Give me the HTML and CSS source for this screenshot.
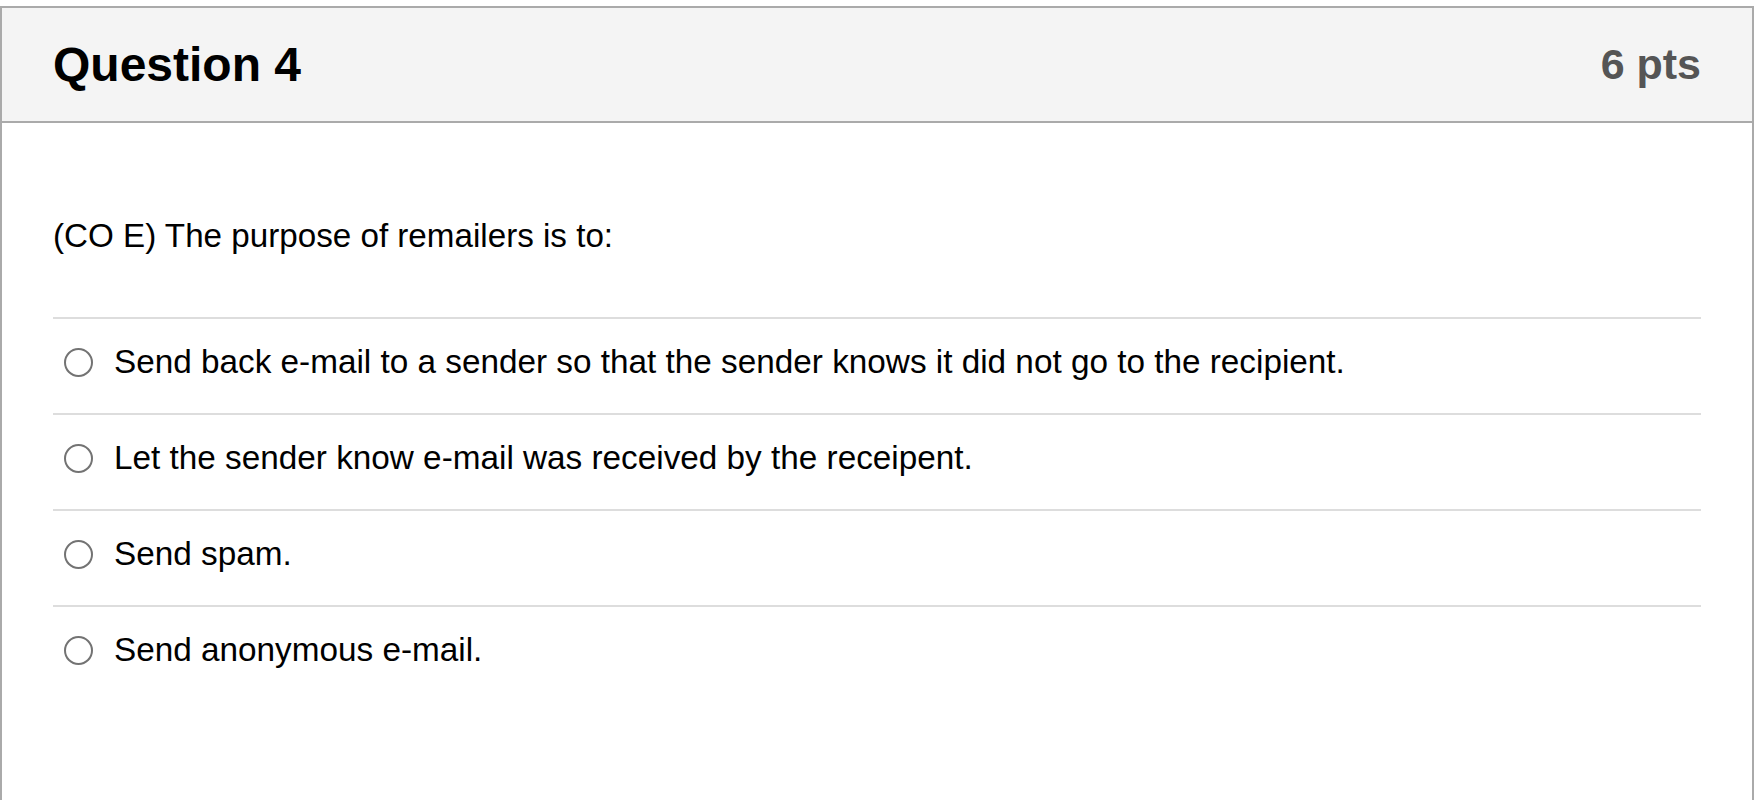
FILE: index.html
```html
<!DOCTYPE html>
<html lang="en">
<head>
<meta charset="utf-8">
<title>Question 4</title>
<link rel="stylesheet" href="styles.css">
</head>
<body>
<div class="card">
  <div class="card-header">
    <h2 class="q-title">Question 4</h2>
    <span class="q-points">6 pts</span>
  </div>
  <div class="card-body">
    <p class="q-text">(CO E) The purpose of remailers is to:</p>
    <div class="answers">
      <label class="answer"><span class="radio"></span><span class="answer-text">Send back e-mail to a sender so that the sender knows it did not go to the recipient.</span></label>
      <label class="answer"><span class="radio"></span><span class="answer-text">Let the sender know e-mail was received by the receipent.</span></label>
      <label class="answer"><span class="radio"></span><span class="answer-text">Send spam.</span></label>
      <label class="answer"><span class="radio"></span><span class="answer-text">Send anonymous e-mail.</span></label>
    </div>
  </div>
</div>
</body>
</html>
```
FILE: styles.css
```css
html, body {
  margin: 0;
  padding: 0;
  background: #fff;
}
body {
  font-family: "Liberation Sans", Arial, sans-serif;
  color: #000;
}
.card {
  box-sizing: border-box;
  width: 1754px;
  height: 794px;
  margin-top: 6px;
  border: 2px solid #aaa;
  border-bottom: none;
  background: #fff;
}
.card-header {
  box-sizing: border-box;
  height: 115px;
  background: #f4f4f4;
  border-bottom: 2px solid #aaa;
  padding: 0 51px;
  display: flex;
  align-items: center;
  justify-content: space-between;
}
.q-title {
  margin: 0;
  font-size: 48px;
  font-weight: bold;
  color: #000;
}
.q-points {
  font-size: 43px;
  font-weight: bold;
  color: #555;
}
.card-body {
  padding: 88px 51px 0 51px;
}
.q-text {
  margin: 0 0 56px 0;
  font-size: 33.2px;
  line-height: 50px;
}
.answers {
  display: flex;
  flex-direction: column;
}
.answer {
  display: flex;
  align-items: center;
  border-top: 2px solid #ddd;
  padding: 18px 0 26px 11px;
  height: 50px;
}
.radio {
  box-sizing: border-box;
  width: 29px;
  height: 29px;
  border: 2px solid #737373;
  border-radius: 50%;
  background: #fff;
  flex: none;
  margin-right: 21px;
}
.answer-text {
  font-size: 33.3px;
  line-height: 50px;
}
```
